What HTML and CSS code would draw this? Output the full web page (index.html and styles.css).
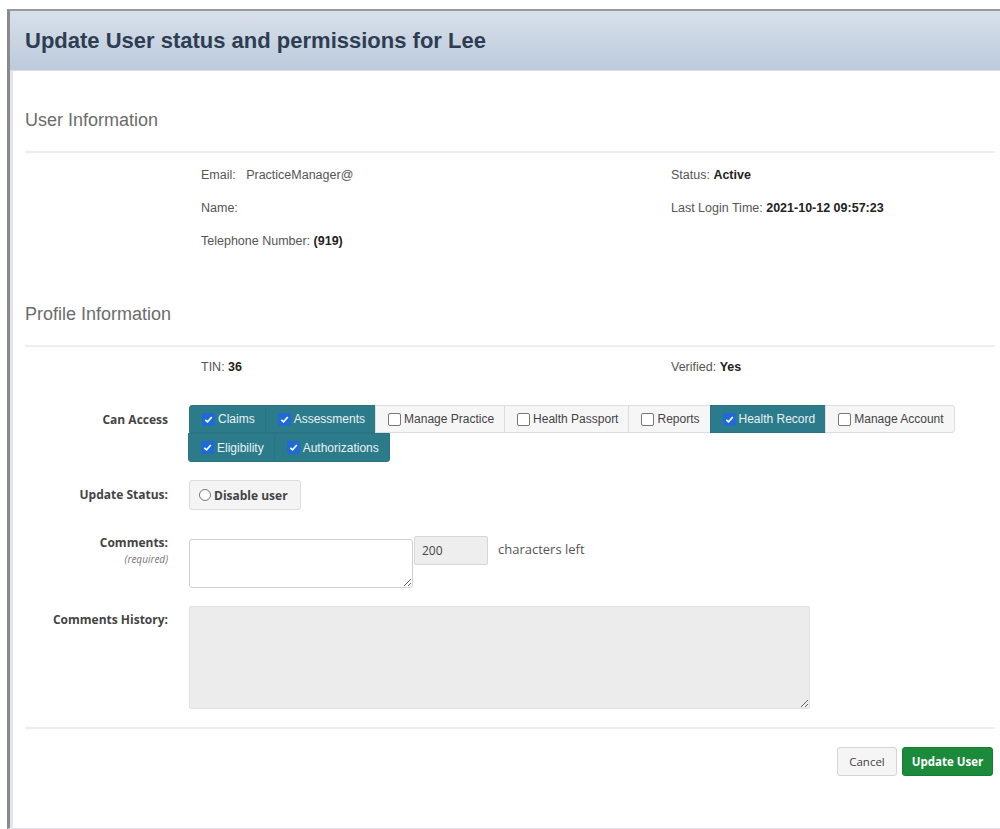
FILE: index.html
```html
<!DOCTYPE html>
<html lang="en">
<head>
<meta charset="utf-8">
<title>Update User</title>
<link rel="stylesheet" href="styles.css">
</head>
<body>
<div class="frame">
  <div class="modal-header">
    <h1 class="modal-title">Update User status and permissions for Lee</h1>
  </div>
  <div class="modal-body">
    <h2 class="section-title first">User Information</h2>
    <hr class="rule">
    <div class="info-grid">
      <div class="info-col">
        <div class="info-row">Email: &nbsp; PracticeManager@</div>
        <div class="info-row">Name:</div>
        <div class="info-row">Telephone Number: <b>(919)</b></div>
      </div>
      <div class="info-col">
        <div class="info-row">Status: <b>Active</b></div>
        <div class="info-row">Last Login Time: <b>2021-10-12 09:57:23</b></div>
      </div>
    </div>

    <h2 class="section-title second">Profile Information</h2>
    <hr class="rule">
    <div class="info-grid profile">
      <div class="info-col"><div class="info-row">TIN: <b>36</b></div></div>
      <div class="info-col"><div class="info-row">Verified: <b>Yes</b></div></div>
    </div>

    <div class="form-row access-row">
      <div class="form-label">Can Access</div>
      <div class="access">
        <div class="btn-line">
          <span class="tog on first-l"><span class="cb"></span>Claims</span>
          <span class="tog on"><span class="cb"></span>Assessments</span>
          <span class="tog"><span class="cb"></span>Manage Practice</span>
          <span class="tog"><span class="cb"></span>Health Passport</span>
          <span class="tog"><span class="cb"></span>Reports</span>
          <span class="tog on"><span class="cb"></span>Health Record</span>
          <span class="tog last-r"><span class="cb"></span>Manage Account</span>
        </div>
        <div class="btn-line second-line">
          <span class="tog on first-l bl"><span class="cb"></span>Eligibility</span>
          <span class="tog on br"><span class="cb"></span>Authorizations</span>
        </div>
      </div>
    </div>

    <div class="form-row status-row">
      <div class="form-label">Update Status:</div>
      <span class="radio-btn"><span class="radio"></span>Disable user</span>
    </div>

    <div class="form-row comments-row">
      <div class="form-label">Comments:<small>(required)</small></div>
      <textarea class="comment-box"></textarea>
      <input class="count" type="text" value="200" readonly>
      <span class="count-text">characters left</span>
    </div>

    <div class="form-row history-row">
      <div class="form-label">Comments History:</div>
      <textarea class="history-box" readonly></textarea>
    </div>

    <hr class="rule footer-rule">
    <div class="actions">
      <button class="btn-cancel">Cancel</button>
      <button class="btn-update">Update User</button>
    </div>
  </div>
</div>
</body>
</html>
```

FILE: styles.css
```css
* { box-sizing: border-box; }

html, body {
  margin: 0;
  padding: 0;
  background: #ffffff;
}

body {
  font-family: "Liberation Sans", Arial, sans-serif;
  color: #333;
  padding: 9px 0 0 7px;
}

.frame {
  height: 820px;
  border-top: 2px solid #9a9a9a;
  border-left: 3px solid #8a8a8a;
  border-bottom: 1px solid #e4e8ee;
  box-shadow: inset 3px 0 0 #dfe6ef;
  background: #fff;
}

.modal-header {
  height: 60px;
  background: linear-gradient(#d8e1eb, #c9d4e2 55%, #bccadb);
  border-bottom: 1px solid #d7e0ea;
  display: flex;
  align-items: center;
  padding-left: 15px;
}

.modal-title {
  margin: 0;
  font-size: 22px;
  font-weight: bold;
  color: #2e3d52;
}

.modal-body {
  padding: 0 5px 0 15px;
}

.section-title {
  margin: 0;
  font-family: "Liberation Sans", Arial, sans-serif;
  font-weight: normal;
  font-size: 18px;
  line-height: 20px;
  color: #6b6b6b;
}
.section-title.first { padding-top: 39px; }
.section-title.second { padding-top: 37px; }

.rule {
  margin: 21px 0 0 0;
  border: 0;
  border-top: 2px solid #eeeeee;
  height: 0;
}

.info-grid {
  display: grid;
  grid-template-columns: 470px 1fr;
  padding-left: 176px;
  padding-top: 15px;
}

.info-row {
  font-size: 12.5px;
  line-height: 14px;
  color: #555;
  margin-bottom: 19px;
}
.info-row b { color: #222; }

.info-grid.profile { padding-top: 13px; }
.info-grid.profile .info-row { margin-bottom: 0; }

.form-row {
  display: flex;
  align-items: flex-start;
}

.form-label {
  width: 143px;
  flex: none;
  margin-right: 21px;
  text-align: right;
  font-size: 12px;
  font-weight: bold;
  color: #444;
  font-family: "Open Sans", "Liberation Sans", sans-serif;
}
.form-label small {
  display: block;
  font-weight: normal;
  font-style: italic;
  font-size: 10px;
  color: #777;
  margin-top: 2px;
}

/* permission toggles */
.access-row { margin-top: 31px; }
.access-row .form-label { padding-top: 6px; }

.btn-line { display: flex; }
.second-line { margin-left: -1px; }

.tog {
  display: inline-flex;
  align-items: center;
  height: 28px;
  padding: 0 10px 0 12px;
  font-size: 12px;
  color: #444;
  background: #f6f6f6;
  border: 1px solid #dddddd;
  margin-left: -1px;
  white-space: nowrap;
}
.tog.on {
  background: #2c7b8b;
  border-color: #2a7483;
  color: #e9f2f4;
}
.tog.first-l { border-radius: 3px 0 0 0; margin-left: 0; }
.tog.last-r { border-radius: 0 3px 3px 0; }
.tog.bl { border-radius: 0 0 0 3px; height: 29px; }
.tog.br { border-radius: 0 0 3px 0; height: 29px; }

.cb {
  width: 13px;
  height: 13px;
  border: 1px solid #777;
  border-radius: 2px;
  background: #fff;
  margin-right: 3px;
  flex: none;
}
.tog.on .cb {
  border-color: #1f6ad6;
  background: #1f6ad6 url("data:image/svg+xml;utf8,<svg xmlns='http://www.w3.org/2000/svg' viewBox='0 0 12 12'><path d='M2.5 6.3 5 8.6 9.6 3.2' fill='none' stroke='white' stroke-width='1.8'/></svg>") center/11px 11px no-repeat;
}

/* status */
.status-row { margin-top: 18px; }
.status-row .form-label { padding-top: 6px; }

.radio-btn {
  display: inline-flex;
  align-items: center;
  height: 30px;
  width: 112px;
  padding-left: 9px;
  font-size: 12px;
  font-weight: bold;
  color: #444;
  font-family: "Open Sans", "Liberation Sans", sans-serif;
  background: #f4f4f4;
  border: 1px solid #dcdcdc;
  border-radius: 3px;
}
.radio {
  width: 12px;
  height: 12px;
  border: 1px solid #777;
  border-radius: 50%;
  background: #fff;
  margin-right: 3px;
}

/* comments */
.comments-row { margin-top: 26px; }
.comments-row .form-label { padding-top: 0; line-height: 14px; }

.comment-box {
  width: 224px;
  height: 49px;
  margin-top: 3px;
  border: 1px solid #cfcfcf;
  border-radius: 3px;
  background: #fff;
  resize: both;
  font-family: inherit;
}

.count {
  width: 74px;
  height: 29px;
  margin-left: 1px;
  border: 1px solid #d6d6d6;
  border-radius: 2px;
  background: #eeeeee;
  font-family: "Open Sans", "Liberation Sans", sans-serif;
  font-size: 12px;
  color: #444;
  padding: 0 0 0 7px;
}

.count-text {
  margin-left: 10px;
  padding-top: 4px;
  font-size: 13px;
  color: #555;
  font-family: "Open Sans", "Liberation Sans", sans-serif;
}

/* history */
.history-row { margin-top: 18px; }
.history-row .form-label { padding-top: 5px; }

.history-box {
  width: 621px;
  height: 103px;
  border: 1px solid #e2e2e2;
  border-radius: 2px;
  background: #ececec;
  resize: both;
}

.footer-rule { margin-top: 18px; }

.actions {
  display: flex;
  justify-content: flex-end;
  gap: 5px;
  padding: 18px 2px 0 0;
}

.actions button {
  height: 29px;
  font-family: "Open Sans", "Liberation Sans", sans-serif;
  font-size: 11.5px;
  border-radius: 3px;
  cursor: pointer;
}

.btn-cancel {
  width: 60px;
  background: #f5f5f5;
  border: 1px solid #d4d4d4;
  color: #444;
}

.btn-update {
  width: 91px;
  background: #1b8a3b;
  border: 1px solid #187a34;
  color: #ffffff;
  font-weight: bold;
}
```
